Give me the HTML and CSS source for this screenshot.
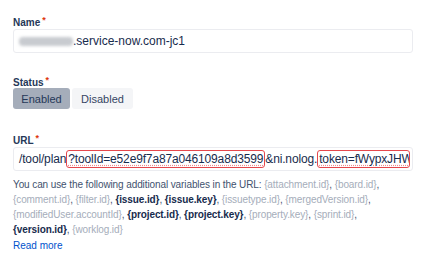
FILE: index.html
```html
<!DOCTYPE html>
<html>
<head>
<meta charset="utf-8">
<link rel="stylesheet" href="styles.css">
</head>
<body>
<div class="form">
  <div class="field">
    <div class="label">Name<span class="req">*</span></div>
    <div class="input"><span class="blur"></span><span>.service-now.com-jc1</span></div>
  </div>
  <div class="field status">
    <div class="label">Status<span class="req">*</span></div>
    <div class="toggle">
      <span class="btn on">Enabled</span>
      <span class="btn">Disabled</span>
    </div>
  </div>
  <div class="field url">
    <div class="label">URL<span class="req">*</span></div>
    <div class="input urlinput"><span>/tool/plan</span><span class="mark sp">?toolId=e52e9f7a87a046109a8d3599</span><span>&amp;ni.nolog.</span><span class="mark last"><span class="sp">token=fWypxJHW</span></span></div>
  </div>
  <p class="help">You can use the following additional variables in the URL: <span class="g">{attachment.id}</span>, <span class="g">{board.id}</span>, <span class="g">{comment.id}</span>, <span class="g">{filter.id}</span>, <b>{issue.id}</b>, <b>{issue.key}</b>, <span class="g">{issuetype.id}</span>, <span class="g">{mergedVersion.id}</span>, <span class="g">{modifiedUser.accountId}</span>, <b>{project.id}</b>, <b>{project.key}</b>, <span class="g">{property.key}</span>, <span class="g">{sprint.id}</span>, <b>{version.id}</b>, <span class="g">{worklog.id}</span></p>
  <a class="more">Read more</a>
</div>
</body>
</html>
```

FILE: styles.css
```css
* { box-sizing: border-box; }
html, body { margin: 0; padding: 0; background: #fff; }
body { font-family: "Liberation Sans", Arial, sans-serif; color: #172b4d; width: 426px; height: 262px; overflow: hidden; }
.form { padding: 17px 13px 0 13px; display: flex; flex-direction: column; }
.label { font-size: 10px; font-weight: bold; color: #253858; line-height: 12px; height: 12px; }
.req { color: #de350b; font-size: 9px; margin-left: 2px; position: relative; top: -3px; }
.input { width: 400px; height: 24px; border: 1.5px solid #ebecf0; border-radius: 3px; display: flex; align-items: center; padding-left: 5px; font-size: 12px; color: #172b4d; white-space: nowrap; overflow: hidden; }
.blur { display: inline-block; width: 54px; height: 9px; background: #c8cbd0; border-radius: 4px; filter: blur(1.5px); }
.status { margin-top: 24px; }
.toggle { display: flex; gap: 2px; margin-top: -1px; }
.btn { height: 21px; display: flex; align-items: center; justify-content: center; font-size: 11px; border-radius: 3px; background: #f4f5f7; color: #344563; width: 61px; }
.btn.on { background: #a5adba; color: #253858; width: 57px; }
.url { margin-top: 26px; }
.urlinput { padding-left: 5px; letter-spacing: -0.15px; }
.mark { border: 1.5px solid #e5484d; border-radius: 3px; height: 18px; display: inline-flex; align-items: center; padding: 0 1px; }
.last { width: 93px; flex: none; overflow: hidden; justify-content: flex-start; }
.sp { text-decoration: underline dotted #f08a8c; text-underline-offset: 2px; }
.help { margin: 6px 0 0 0; font-size: 10px; line-height: 15px; color: #42526e; width: 400px; letter-spacing: -0.1px; }
.help b { color: #172b4d; font-weight: bold; }
.help .g { color: #a5adba; }
.more { font-size: 10px; color: #0052cc; margin-top: 2px; line-height: 14px; }
```
